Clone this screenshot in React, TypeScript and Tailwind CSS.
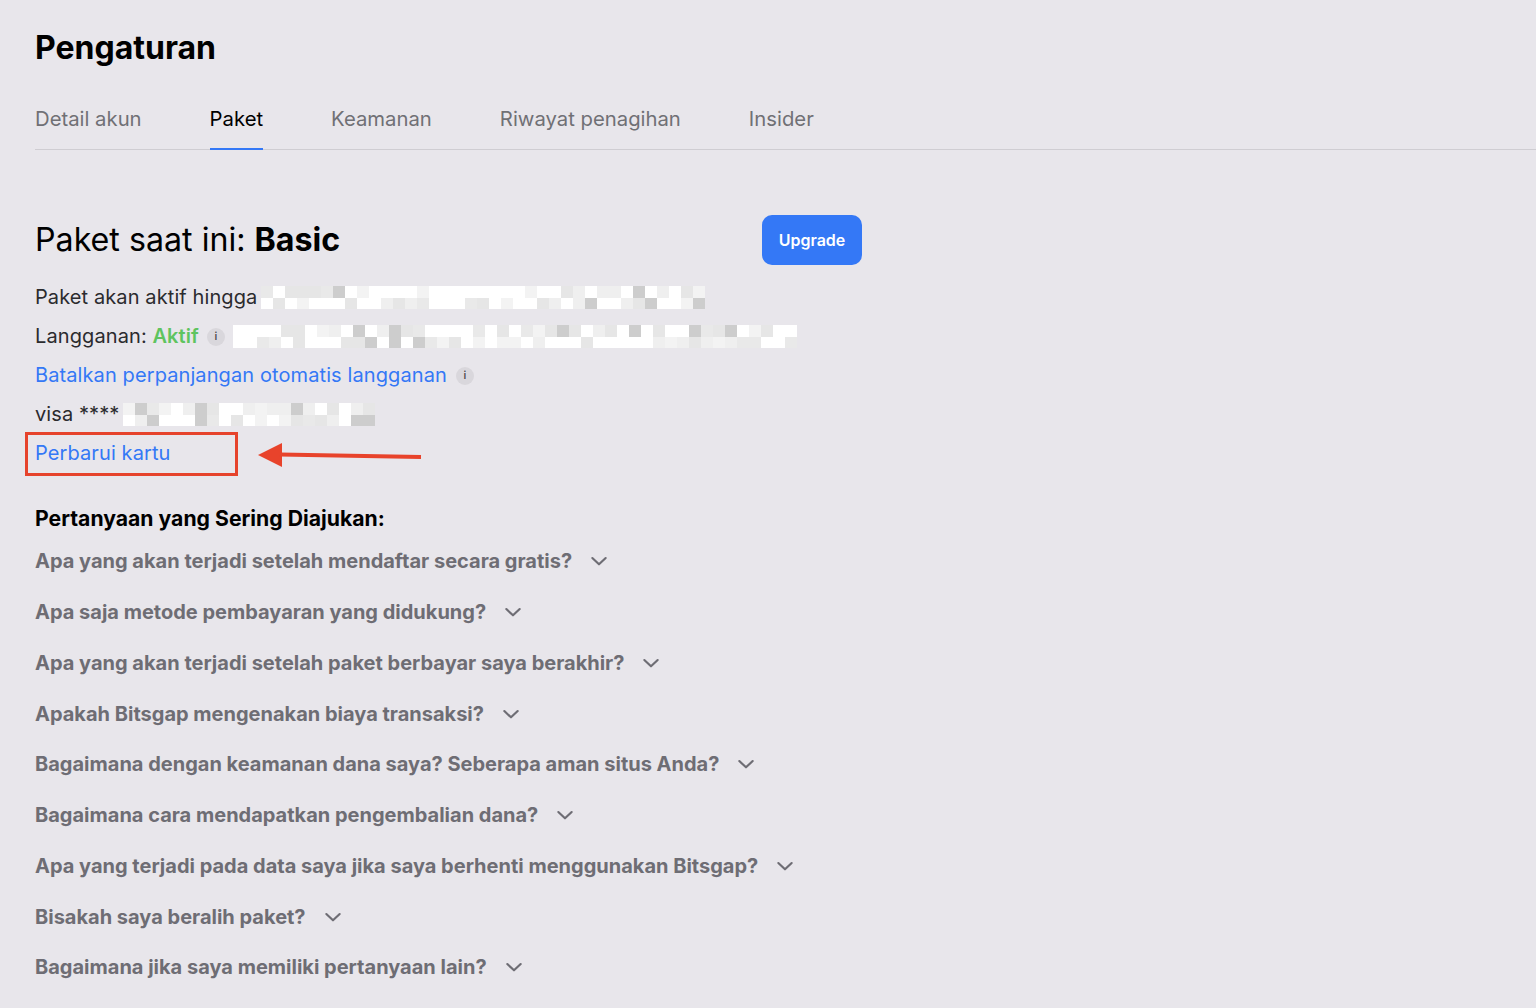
import React from "react";

const PALETTE = ["#ffffff", "#f3f3f3", "#e6e6e6", "#ffffff", "#efefef", "#cdcdcd", "#ffffff", "#e9e9e9"];

function Pixelated({ cols, seed }: { cols: number; seed: number }) {
  const cells: string[] = [];
  let s = seed;
  for (let i = 0; i < cols * 2; i++) {
    s = (s * 9301 + 49297) % 233280;
    cells.push(PALETTE[Math.floor(s / 7) % PALETTE.length]);
  }
  return (
    <span className="inline-grid grid-rows-2 grid-flow-col align-middle" style={{ gridTemplateColumns: `repeat(${cols}, 12px)` }}>
      {cells.map((c, i) => (
        <span key={i} className="block h-[11.5px] w-[12px]" style={{ backgroundColor: c }} />
      ))}
    </span>
  );
}

function Info() {
  return (
    <span className="inline-flex h-[18px] w-[18px] items-center justify-center rounded-full bg-[#d9d7dc] text-[11px] font-medium text-[#444] align-middle">
      i
    </span>
  );
}

function Chevron() {
  return (
    <svg width="20" height="20" viewBox="0 0 24 24" fill="none" stroke="#6e6d74" strokeWidth="2.6" strokeLinecap="round" strokeLinejoin="round">
      <path d="M4 8.5l8 7.5 8-7.5" />
    </svg>
  );
}

const tabs = ["Detail akun", "Paket", "Keamanan", "Riwayat penagihan", "Insider"];

const faqs = [
  "Apa yang akan terjadi setelah mendaftar secara gratis?",
  "Apa saja metode pembayaran yang didukung?",
  "Apa yang akan terjadi setelah paket berbayar saya berakhir?",
  "Apakah Bitsgap mengenakan biaya transaksi?",
  "Bagaimana dengan keamanan dana saya? Seberapa aman situs Anda?",
  "Bagaimana cara mendapatkan pengembalian dana?",
  "Apa yang terjadi pada data saya jika saya berhenti menggunakan Bitsgap?",
  "Bisakah saya beralih paket?",
  "Bagaimana jika saya memiliki pertanyaan lain?",
];

export default function App() {
  return (
    <div className="min-h-[1008px] w-full bg-[#e8e6eb] pl-[35px] text-black" style={{ fontFamily: "Inter, 'Noto Sans', sans-serif" }}>
      <h1 className="pt-[28px] text-[32px] font-bold leading-[40px]">Pengaturan</h1>
      <div className="mt-[39px] flex gap-[68px] border-b border-[#cfcdd2]">
        {tabs.map((t) => (
          <div
            key={t}
            className={
              t === "Paket"
                ? "-mb-px border-b-2 border-[#3478f6] pb-[16px] text-[20.3px] leading-[24px] text-black"
                : "pb-[18px] text-[20.3px] leading-[24px] text-[#707075]"
            }
          >
            {t}
          </div>
        ))}
      </div>

      <div className="mt-[65px] flex w-[827px] items-center justify-between">
        <div className="text-[32.2px] leading-[50px]">
          Paket saat ini: <span className="font-bold">Basic</span>
        </div>
        <button className="h-[50px] w-[100px] rounded-[10px] bg-[#3478f6] text-[16px] font-semibold text-white">Upgrade</button>
      </div>

      <div className="mt-[13px] flex flex-col text-[20px] leading-[39px] tracking-[0.1px] text-[#2b2b2e]">
        <div className="flex items-center gap-[4px]">
          <span>Paket akan aktif hingga</span>
          <Pixelated cols={37} seed={7} />
        </div>
        <div className="flex items-center gap-[8px]">
          <span>
            Langganan: <span className="font-semibold text-[#5fc45f]">Aktif</span>
          </span>
          <Info />
          <Pixelated cols={47} seed={13} />
        </div>
        <div className="flex items-center gap-[9px]">
          <span className="text-[#3478f6]">Batalkan perpanjangan otomatis langganan</span>
          <Info />
        </div>
        <div className="flex items-center gap-[4px]">
          <span>visa ****</span>
          <Pixelated cols={21} seed={29} />
        </div>
        <div className="relative -mt-[2px]">
          <div className="-ml-[10px] inline-block h-[44px] w-[213px] border-[3px] border-[#e6432c] pl-[7px] leading-[36px]">
            <span className="text-[#3478f6]">Perbarui kartu</span>
          </div>
          <svg className="absolute left-[223px] top-[9px]" width="170" height="30" viewBox="0 0 170 30">
            <polygon points="0,14 24,2 24,26" fill="#e8432b" />
            <path d="M22 13.5 L163 16" stroke="#e8432b" strokeWidth="4" />
          </svg>
        </div>
      </div>

      <h2 className="mt-[29px] text-[21.2px] font-bold leading-[26px]">Pertanyaan yang Sering Diajukan:</h2>
      <div className="mt-[5px] flex flex-col">
        {faqs.map((q) => (
          <div key={q} className="flex h-[50.75px] items-center gap-[17px] text-[20px] font-bold text-[#6e6d74]">
            <span>{q}</span>
            <Chevron />
          </div>
        ))}
      </div>
    </div>
  );
}
